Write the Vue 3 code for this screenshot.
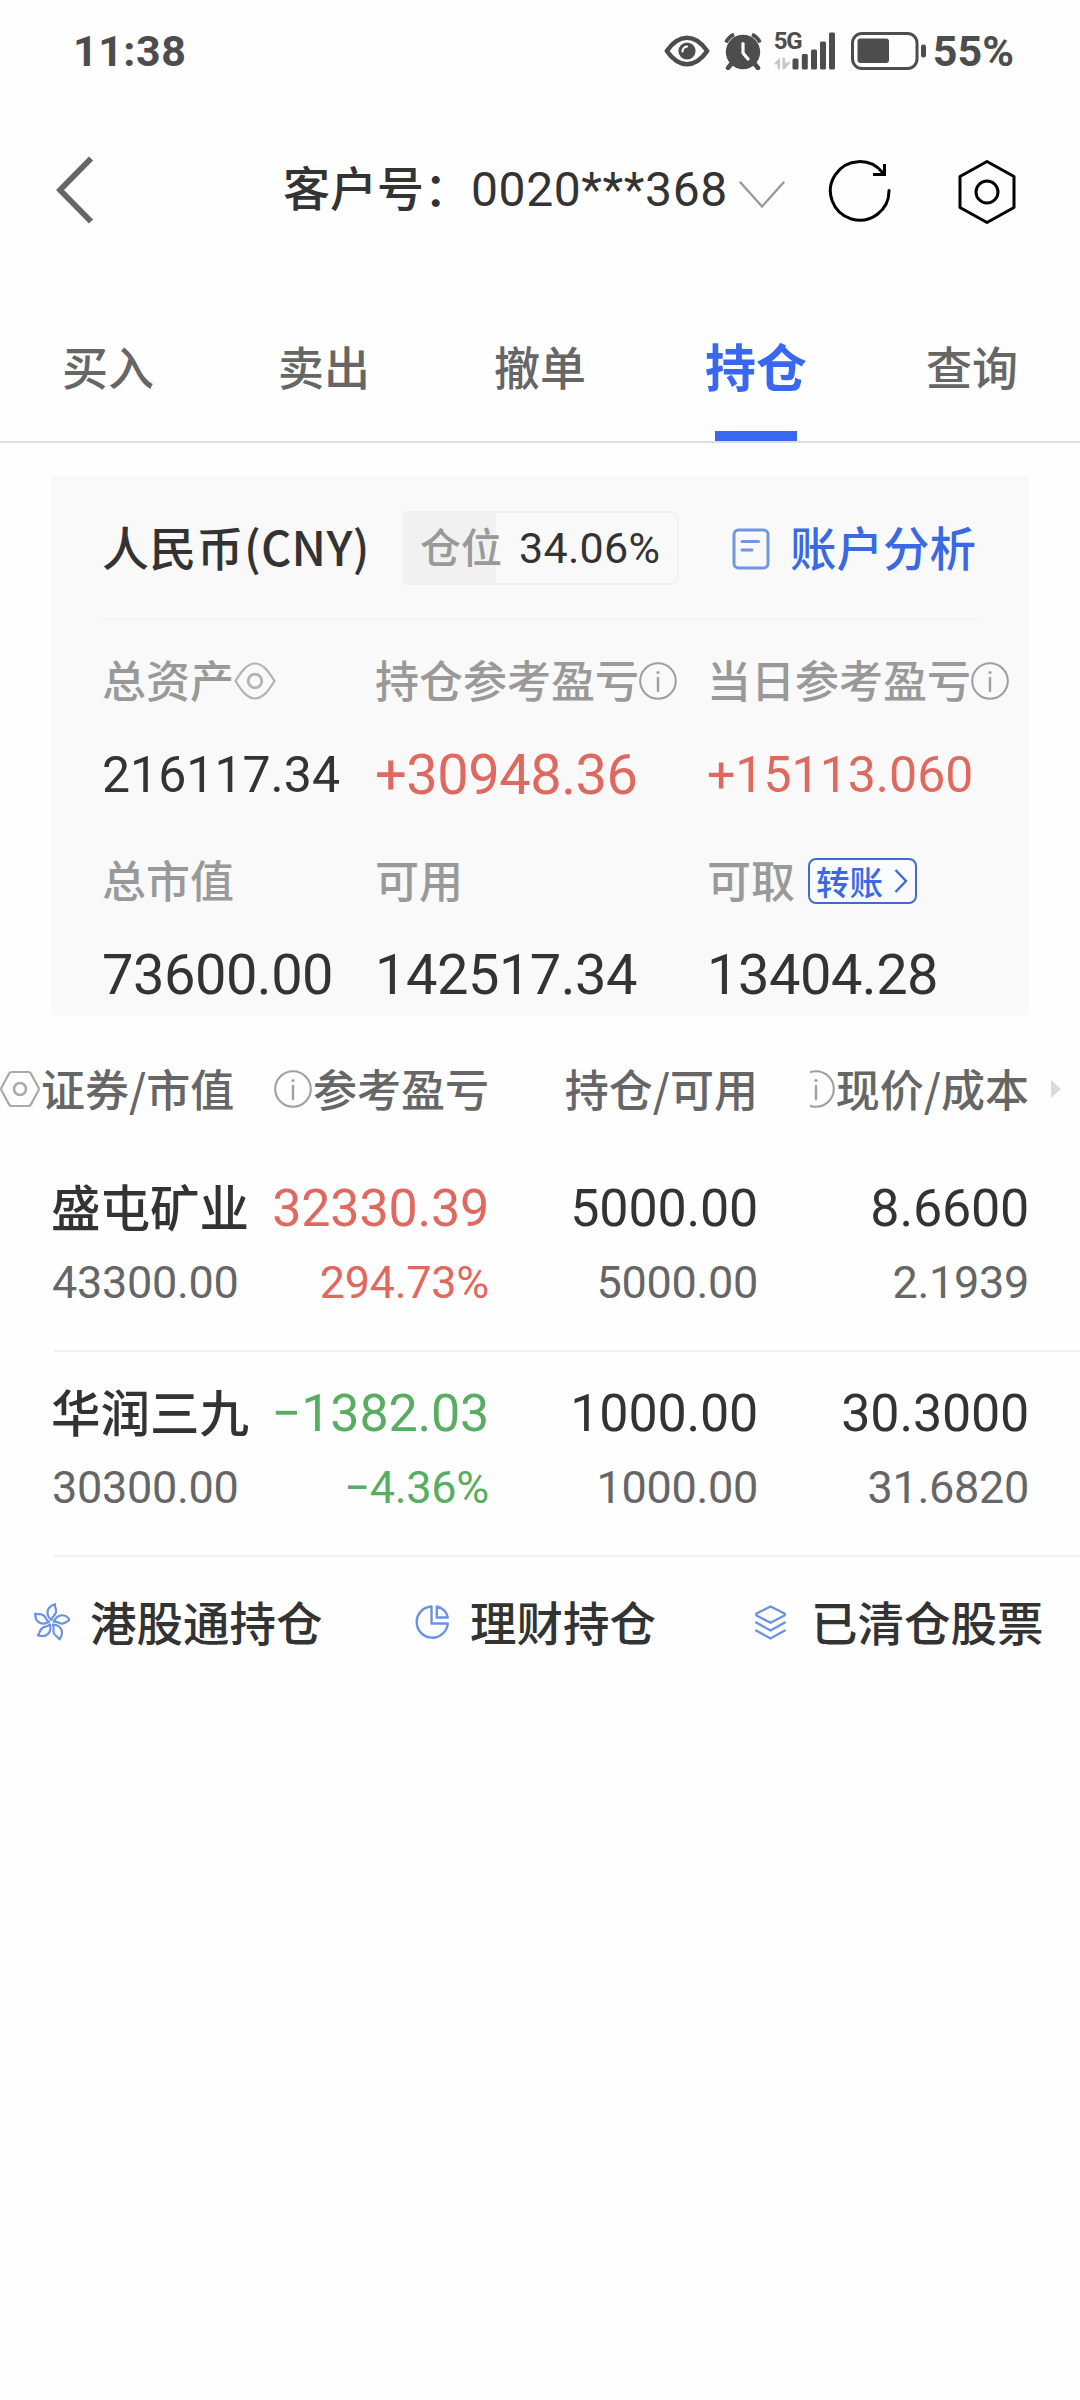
<template>
  <main class="page">
    <!-- 系统状态栏 -->
    <header class="status-bar">
      <span class="time">11:38</span>
      <div class="status-icons">
        <svg class="icon-eye" viewBox="0 0 46 32">
          <path d="M2.8 16C9 7 15.500 2.800 23 2.800S37 7 43.200 16C37 25 30.500 29.200 23 29.200S9 25 2.800 16Z" fill="none" stroke="#4d4d4d" stroke-width="4.600" stroke-linejoin="round" />
          <circle cx="23" cy="16" r="8.600" fill="#4d4d4d" />
          <path d="M18.500 16.500A5 5 0 0 1 23 11.500" fill="none" stroke="#fff" stroke-width="2.200" stroke-linecap="round" />
        </svg>
        <svg class="icon-alarm" viewBox="0 0 38 38">
          <circle cx="19" cy="20" r="17.200" fill="#4d4d4d" />
          <path d="M8 31L4 36M30 31L34 36" stroke="#4d4d4d" stroke-width="4.500" stroke-linecap="round" />
          <path d="M2 10.500A16 16 0 0 1 10 2.500M28 2.500A16 16 0 0 1 36 10.500" fill="none" stroke="#4d4d4d" stroke-width="3.600" />
          <path d="M19 11.500V21L24 27" fill="none" stroke="#fff" stroke-width="3.200" stroke-linecap="round" stroke-linejoin="round" />
        </svg>
        <div class="signal">
          <span class="network">5G</span>
          <svg class="icon-signal" viewBox="0 0 62 38">
            <path d="M0.500 32L5.500 26V37H4V32ZM9 26H10.500V31.500L16 30.500L10.500 37H9Z" fill="#c8c8c8" stroke="#c8c8c8" />
            <g fill="#4d4d4d">
              <rect x="18.500" y="26.500" width="6" height="11" rx="1.500" />
              <rect x="27.800" y="22" width="6" height="15.500" rx="1.500" />
              <rect x="37" y="17.500" width="6" height="20" rx="1.500" />
              <rect x="46" y="9.500" width="6" height="28" rx="1.500" />
              <rect x="55" y="0.500" width="6" height="37" rx="1.500" />
            </g>
          </svg>
        </div>
        <svg class="icon-battery" viewBox="0 0 76 38">
          <rect x="1.500" y="1.500" width="64.500" height="35" rx="9.500" fill="none" stroke="#4d4d4d" stroke-width="3" />
          <rect x="6.500" y="6.500" width="31.500" height="24.500" rx="3" fill="#4d4d4d" />
          <rect x="70" y="12.500" width="5" height="13" rx="2.200" fill="#4d4d4d" />
        </svg>
        <span class="battery-text">55%</span>
      </div>
    </header>

    <!-- 导航栏 -->
    <nav class="nav-bar">
      <svg class="icon-back" viewBox="0 0 38 68">
        <path d="M35 2.500L4 34L35 65.500" fill="none" stroke="#666" stroke-width="5.800" />
      </svg>
      <div class="account">
        客户号：<span class="num account-no">{{ accountNo }}</span>
      </div>
      <svg class="icon-down" viewBox="0 0 46 28">
        <path d="M1.500 1.500L23 25.500L44.500 1.500" fill="none" stroke="#999" stroke-width="2.400" stroke-linecap="round" />
      </svg>
      <svg class="icon-refresh" viewBox="0 0 64 64">
        <g fill="none" stroke="#000" stroke-width="3">
          <path d="M61 31.500A29.300 29.300 0 1 1 54.500 13.500" stroke-linecap="round" />
          <path d="M56.500 5V15.500H45" />
        </g>
      </svg>
      <svg class="icon-setting" viewBox="0 0 60 66">
        <g fill="none" stroke="#000" stroke-width="3" stroke-linejoin="round">
          <path d="M30 2.500L57 17.500V48.500L30 63.500L3 48.500V17.500Z" />
          <circle cx="30" cy="33" r="11" />
        </g>
      </svg>
    </nav>

    <div class="tabs">
      <div
        v-for="tab in tabs"
        :key="tab"
        class="tab"
        :class="{ active: tab === activeTab }"
        @click="activeTab = tab"
      >
        <span>{{ tab }}</span>
      </div>
    </div>

    <!-- 资产卡片 -->
    <section class="asset-card">
      <div class="card-top">
        <span class="currency">人民币(CNY)</span>
        <div class="ratio">
          <div class="ratio-fill" :style="{ width: ratio + '%' }"></div>
          <span class="ratio-label">仓位</span>
          <span class="num ratio-value">{{ ratio }}%</span>
        </div>
        <a class="analysis">
          <svg class="icon-doc" viewBox="0 0 38 42">
            <g fill="none" stroke="#7097e0" stroke-width="3" stroke-linecap="round">
              <rect x="2" y="2" width="34" height="38" rx="4.500" />
              <path d="M10 13.500H26.500M10 22H20" />
            </g>
          </svg>
          <span>账户分析</span>
        </a>
      </div>
      <div class="asset-grid">
        <div v-for="item in assets" :key="item.label" class="asset-item">
          <div class="asset-label">
            {{ item.label }}
            <svg v-if="item.icon === 'eye'" class="icon-view" viewBox="0 0 42 38">
              <g fill="none" stroke="#b3b3b3" stroke-width="2.200">
                <path d="M1.500 19C7 10 13 1.500 21 1.500S35 10 40.500 19C35 28 29 36.500 21 36.500S7 28 1.500 19Z" />
                <circle cx="21" cy="19" r="6.800" stroke-width="2.800" />
              </g>
            </svg>
            <InfoIcon v-if="item.icon === 'info'" class="icon-info" />
            <span v-if="item.transfer" class="transfer">
              转账
              <svg class="icon-right" viewBox="0 0 14 26">
                <path d="M1.500 2L12 13L1.500 24" fill="none" stroke="#3f6ad8" stroke-width="2.400" />
              </svg>
            </span>
          </div>
          <div class="num asset-value" :class="{ large: item.large, up: item.value.startsWith('+') }">
            {{ item.value }}
          </div>
        </div>
      </div>
    </section>

    <!-- 持仓列表 -->
    <section class="holdings">
      <div class="table-head">
        <div class="head-cell first">
          <svg class="icon-hex" viewBox="0 0 40 38">
            <g fill="none" stroke="#aaa" stroke-width="2.200" stroke-linejoin="round">
              <path d="M11.500 2H28.500Q30 2 30.800 3.400L38.500 17.500Q39.200 19 38.500 20.500L30.800 34.600Q30 36 28.500 36H11.500Q10 36 9.200 34.600L1.500 20.500Q0.800 19 1.500 17.500L9.200 3.400Q10 2 11.500 2Z" />
              <circle cx="20" cy="19" r="6" stroke-width="2.600" />
            </g>
          </svg>
          <span>证券/市值</span>
        </div>
        <div class="head-cell"><InfoIcon class="icon-info" /><span>参考盈亏</span></div>
        <div class="head-cell"><span>持仓/可用</span></div>
        <div class="head-cell"><InfoIcon class="icon-info" /><span>现价/成本</span></div>
        <span class="more"></span>
      </div>

      <div v-for="stock in stocks" :key="stock.name" class="stock-row">
        <div class="stock-cell name-cell">
          <span class="stock-name">{{ stock.name }}</span>
          <span class="num sub">{{ stock.marketValue }}</span>
        </div>
        <div class="stock-cell" :class="stock.trend">
          <span class="num main">{{ stock.profit }}</span>
          <span class="num sub">{{ stock.profitRate }}</span>
        </div>
        <div class="stock-cell">
          <span class="num main">{{ stock.amount }}</span>
          <span class="num sub">{{ stock.available }}</span>
        </div>
        <div class="stock-cell">
          <span class="num main">{{ stock.price }}</span>
          <span class="num sub">{{ stock.cost }}</span>
        </div>
      </div>
    </section>

    <!-- 底部快捷入口 -->
    <div class="shortcuts">
      <a class="shortcut">
        <svg viewBox="0 0 36 38">
          <g fill="none" stroke="#6a92e2" stroke-width="2.200" stroke-linejoin="round">
            <path
              v-for="n in 5"
              :key="n"
              d="M17.500 17C11.500 12 12 4 21 1.200C20 4 23.500 6 21.500 10.500C20.500 12.800 18 13.500 17.500 17Z"
              :transform="`rotate(${(n - 1) * 72} 17.500 19.500)`"
            />
          </g>
        </svg>
        <span>港股通持仓</span>
      </a>
      <a class="shortcut">
        <svg viewBox="0 0 36 38">
          <g fill="none" stroke="#6a92e2" stroke-width="2.400" stroke-linejoin="round">
            <path d="M17.500 3.500A15.600 15.600 0 1 0 33.800 20.500H17.500Z" />
            <path d="M22.800 3.500A13.500 13.500 0 0 1 33.800 14.500H22.800Z" />
          </g>
        </svg>
        <span>理财持仓</span>
      </a>
      <a class="shortcut">
        <svg viewBox="0 0 36 38">
          <g fill="none" stroke="#6a92e2" stroke-width="2.300" stroke-linecap="round" stroke-linejoin="round">
            <path d="M15.500 3.500L29 10.200Q31 11.500 29 12.800L15.500 19.800L2 12.800Q0 11.500 2 10.200Z" />
            <path d="M1.200 19.500L15.500 27.500L29.800 19.500M1.200 27.500L15.500 35.500L29.800 27.500" />
          </g>
        </svg>
        <span>已清仓股票</span>
      </a>
    </div>
  </main>
</template>

<script setup>
import { ref, h } from 'vue'

// 说明图标
const InfoIcon = () =>
  h('svg', { viewBox: '0 0 38 38' }, [
    h('circle', { cx: 19, cy: 19, r: 17.8, fill: 'none', stroke: '#a0a0a0', 'stroke-width': 2.1 }),
    h('circle', { cx: 19, cy: 10.5, r: 1.6, fill: '#a0a0a0' }),
    h('path', { d: 'M19 16V29', stroke: '#a0a0a0', 'stroke-width': 2.4, 'stroke-linecap': 'round' })
  ])

const accountNo = ref('0020***368')
const tabs = ['买入', '卖出', '撤单', '持仓', '查询']
const activeTab = ref('持仓')
const ratio = ref(34.06)

// 资产数据
const assets = ref([
  { label: '总资产', value: '216117.34', icon: 'eye' },
  { label: '持仓参考盈亏', value: '+30948.36', icon: 'info', large: true },
  { label: '当日参考盈亏', value: '+15113.060', icon: 'info' },
  { label: '总市值', value: '73600.00', large: true },
  { label: '可用', value: '142517.34', large: true },
  { label: '可取', value: '13404.28', large: true, transfer: true }
])

// 持仓数据
const stocks = ref([
  {
    name: '盛屯矿业',
    marketValue: '43300.00',
    profit: '32330.39',
    profitRate: '294.73%',
    trend: 'up',
    amount: '5000.00',
    available: '5000.00',
    price: '8.6600',
    cost: '2.1939'
  },
  {
    name: '华润三九',
    marketValue: '30300.00',
    profit: '−1382.03',
    profitRate: '−4.36%',
    trend: 'down',
    amount: '1000.00',
    available: '1000.00',
    price: '30.3000',
    cost: '31.6820'
  }
])
</script>

<style>
body {
  background: #fefefe;
}
</style>

<style scoped>
* {
  box-sizing: border-box;
}

.page {
  width: 1080px;
  height: 2400px;
  overflow: hidden;
  background: #fefefe;
  color: #333;
  font-family: "Noto Sans CJK SC", sans-serif;
  font-weight: 500;
  white-space: nowrap;
}

svg {
  display: block;
  flex: none;
}

.num {
  font-family: Roboto, "Noto Sans CJK SC", sans-serif;
  font-weight: 400;
}

.up {
  color: #e0695f;
}

.down {
  color: #58ad62;
}

/* 状态栏 */
.status-bar {
  height: 102px;
  padding: 0 66px 0 73px;
  display: flex;
  align-items: center;
  justify-content: space-between;
  font-family: Roboto, sans-serif;
  font-weight: 700;
  font-size: 43px;
  color: #4d4d4d;
}

.time {
  letter-spacing: 0.500px;
}

.status-icons {
  display: flex;
  align-items: center;
}

.icon-eye {
  width: 46px;
  height: 32px;
}

.icon-alarm {
  width: 38px;
  height: 38px;
  margin-left: 14px;
}

.signal {
  position: relative;
  margin-left: 12px;
}

.network {
  position: absolute;
  left: 0;
  top: -3px;
  font-size: 24px;
  line-height: 24px;
  letter-spacing: -1.500px;
}

.icon-signal {
  width: 62px;
  height: 38px;
}

.icon-battery {
  width: 76px;
  height: 38px;
  margin-left: 15px;
}

.battery-text {
  margin-left: 6px;
}

/* 导航栏 */
.nav-bar {
  height: 176px;
  padding-left: 56px;
  display: flex;
  align-items: center;
}

.icon-back {
  width: 38px;
  height: 68px;
}

.account {
  margin-left: 189px;
  width: 445px;
  margin-top: -5px;
  font-size: 47px;
  line-height: 60px;
}

.account-no {
  font-size: 48px;
  letter-spacing: 0.600px;
}

.icon-down {
  width: 46px;
  height: 28px;
  margin: 10px 0 0 11px;
}

.icon-refresh {
  width: 64px;
  height: 64px;
  margin: 2px 0 0 43px;
}

.icon-setting {
  width: 60px;
  height: 66px;
  margin: 4px 0 0 65px;
}

/* 标签栏 */
.tabs {
  height: 165px;
  padding-top: 61px;
  display: grid;
  grid-template-columns: repeat(5, 1fr);
  border-bottom: 2px solid #dcdddd;
}

.tab {
  display: flex;
  flex-direction: column;
  align-items: center;
  justify-content: space-between;
  font-size: 46px;
  line-height: 52px;
  color: #666;
}

.tab.active {
  font-size: 51px;
  font-weight: 700;
  color: #3768ef;
}

.tab.active::after {
  content: "";
  width: 82px;
  height: 10px;
  background: #3768ef;
}

/* 资产卡片 */
.asset-card {
  margin: 33px 51px 0;
  height: 539px;
  padding: 0 51px;
  background: #f9f9f9;
}

.card-top {
  height: 144px;
  display: flex;
  align-items: center;
  border-bottom: 2px solid #f2f2f2;
}

.currency {
  width: 301px;
  margin-top: -3px;
  font-size: 47px;
  letter-spacing: 0.300px;
}

.ratio {
  position: relative;
  width: 276px;
  height: 74px;
  margin-top: 2px;
  padding-left: 15px;
  display: flex;
  align-items: center;
  border: 2px solid #f2f2f2;
  border-radius: 0 8px 8px 0;
}

.ratio-fill {
  position: absolute;
  left: -2px;
  top: -2px;
  height: 74px;
  background: #f1f1f1;
}

.ratio-label {
  position: relative;
  width: 99px;
  margin-top: -7px;
  font-size: 41px;
  color: #999;
}

.ratio-value {
  font-size: 43px;
  letter-spacing: 0.300px;
}

.analysis {
  margin-left: 53px;
  display: flex;
  align-items: center;
  gap: 20px;
  font-size: 46.500px;
  color: #3a69e3;
}

.analysis span {
  margin-top: -3px;
}

.icon-doc {
  width: 38px;
  height: 42px;
  margin-top: 3px;
}

.asset-grid {
  padding-top: 29px;
  display: grid;
  grid-template-columns: 273px 332px 1fr;
  row-gap: 44px;
}

.asset-item {
  display: flex;
  flex-direction: column;
  gap: 36px;
}

.asset-label {
  height: 60px;
  display: flex;
  align-items: center;
  font-size: 44px;
  color: #999;
}

.icon-view {
  width: 42px;
  height: 38px;
  margin-top: 3px;
}

.icon-info {
  width: 38px;
  height: 38px;
}

.asset-label .icon-info {
  margin-top: 3px;
}

.transfer {
  width: 109px;
  height: 46px;
  margin: 4px 0 0 13px;
  padding: 0 7px 0 6px;
  display: flex;
  align-items: center;
  justify-content: space-between;
  border: 2px solid #446bc4;
  border-radius: 8px;
  background: #f9fbff;
  font-size: 33.500px;
  line-height: 38px;
  color: #3a69e3;
}

.icon-right {
  width: 14px;
  height: 26px;
}

.asset-value {
  height: 60px;
  line-height: 61px;
  font-size: 50px;
}

.asset-value.large {
  font-size: 56px;
  letter-spacing: -0.500px;
}

/* 持仓列表 */
.table-head {
  height: 132px;
  padding-top: 14px;
  display: grid;
  grid-template-columns: 270px 219px 269px 52px 219px 51px;
  align-items: center;
  font-size: 44px;
  color: #666;
}

.head-cell {
  display: flex;
  align-items: center;
  justify-content: flex-end;
  overflow: hidden;
}

.head-cell .icon-info {
  margin: 2px 1px 0 0;
}

.head-cell.first {
  justify-content: flex-start;
  gap: 1px;
}

.head-cell:nth-child(4) {
  grid-column: 5;
}

.icon-hex {
  width: 40px;
  height: 38px;
  margin-top: 2px;
}

.more {
  width: 0;
  margin: 2px 0 0 22px;
  border: 9px solid transparent;
  border-left: 10px solid #dadada;
  border-right: 0;
}

.stock-row {
  height: 205px;
  margin-left: 54px;
  padding-top: 32px;
  display: grid;
  grid-template-columns: 216px 219px 269px 271px;
  border-bottom: 2px solid #f1f1f1;
}

.stock-cell {
  display: flex;
  flex-direction: column;
  align-items: flex-end;
  gap: 19px;
}

.name-cell {
  align-items: flex-start;
  margin-left: -3px;
}

.stock-name {
  margin-top: -3px;
  font-size: 49.500px;
  line-height: 60px;
}

.name-cell .sub {
  margin: 3px 0 0 1px;
}

.main {
  font-size: 52px;
  line-height: 60px;
  letter-spacing: -0.200px;
}

.sub {
  font-size: 45px;
  line-height: 50px;
  letter-spacing: -0.300px;
}

.stock-cell:not(.up):not(.down) .sub {
  color: #666;
}

/* 快捷入口 */
.shortcuts {
  height: 127px;
  padding-left: 34px;
  display: grid;
  grid-template-columns: 380px 341px auto;
  align-items: center;
}

.shortcut {
  display: flex;
  align-items: center;
  gap: 20px;
  font-size: 46.500px;
}

.shortcut svg {
  width: 36px;
  height: 38px;
  margin-top: 3px;
}

.shortcut span {
  margin-top: -1px;
}
</style>
